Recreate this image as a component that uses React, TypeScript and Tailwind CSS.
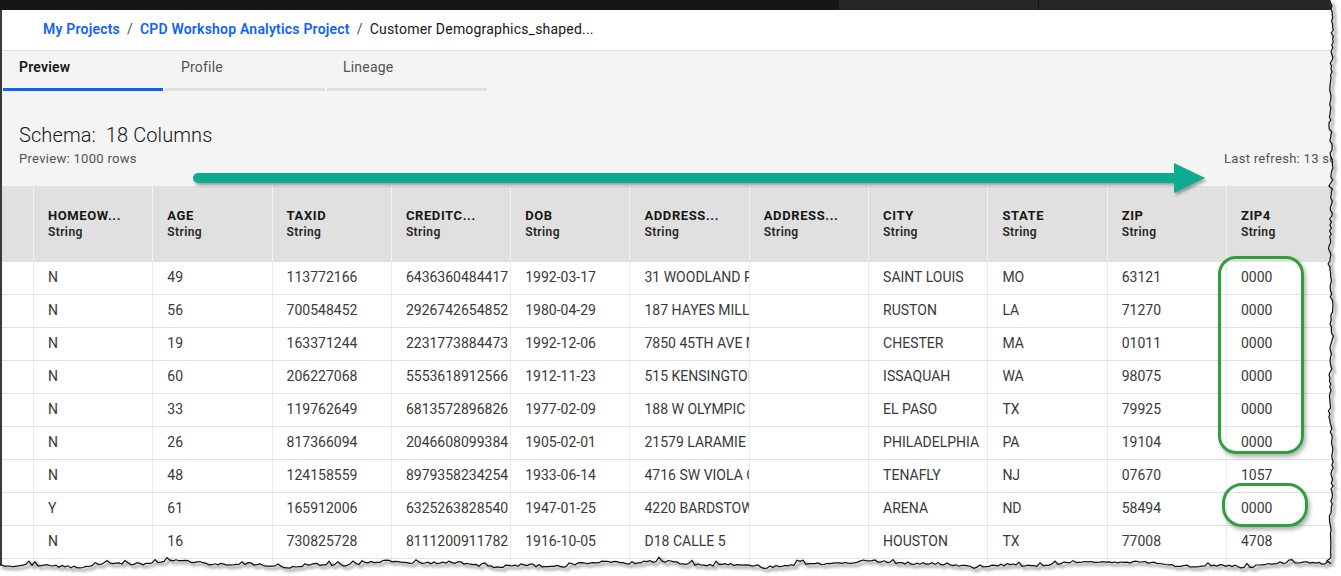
import React from "react";

type Row = string[];

const rows: Row[] = [
  ["N", "49", "113772166", "6436360484417", "1992-03-17", "31 WOODLAND RD", "", "SAINT LOUIS", "MO", "63121", "0000"],
  ["N", "56", "700548452", "2926742654852", "1980-04-29", "187 HAYES MILL RD", "", "RUSTON", "LA", "71270", "0000"],
  ["N", "19", "163371244", "2231773884473", "1992-12-06", "7850 45TH AVE NE", "", "CHESTER", "MA", "01011", "0000"],
  ["N", "60", "206227068", "5553618912566", "1912-11-23", "515 KENSINGTON AVE", "", "ISSAQUAH", "WA", "98075", "0000"],
  ["N", "33", "119762649", "6813572896826", "1977-02-09", "188 W OLYMPIC BLVD", "", "EL PASO", "TX", "79925", "0000"],
  ["N", "26", "817366094", "2046608099384", "1905-02-01", "21579 LARAMIE ST", "", "PHILADELPHIA", "PA", "19104", "0000"],
  ["N", "48", "124158559", "8979358234254", "1933-06-14", "4716 SW VIOLA CT", "", "TENAFLY", "NJ", "07670", "1057"],
  ["Y", "61", "165912006", "6325263828540", "1947-01-25", "4220 BARDSTOWN RD", "", "ARENA", "ND", "58494", "0000"],
  ["N", "16", "730825728", "8111200911782", "1916-10-05", "D18 CALLE 5", "", "HOUSTON", "TX", "77008", "4708"],
  ["N", "52", "418830291", "4417263350918", "1958-07-30", "902 MAPLE ST", "", "DENVER", "CO", "80202", "0000"],
];

const headers = [
  "HOMEOW...",
  "AGE",
  "TAXID",
  "CREDITC...",
  "DOB",
  "ADDRESS...",
  "ADDRESS...",
  "CITY",
  "STATE",
  "ZIP",
  "ZIP4",
];

function makeRng(seed: number) {
  let s = seed;
  return () => {
    s = (s * 16807) % 2147483647;
    return (s - 1) / 2147483646;
  };
}

function tearPaths() {
  const r = makeRng(7);
  const right: [number, number][] = [];
  for (let y = 0; y <= 562; y += 3) {
    let x = 1331 + (r() - 0.5) * 2.6 + Math.sin(y / 23) * 1.2;
    if (r() > 0.93) x -= 2.5;
    right.push([x, y]);
  }
  const bottom: [number, number][] = [];
  for (let x = 1331; x >= -2; x -= 3) {
    let y =
      564 +
      (r() - 0.5) * 2.4 +
      Math.sin(x / 37) * 2.2 +
      Math.sin(x / 11 + 1) * 1.1;
    if (r() > 0.9) y -= 3;
    bottom.push([x, y]);
  }
  const edge = [...right, ...bottom];
  const edgeStr = edge.map((p) => `${p[0].toFixed(1)},${p[1].toFixed(1)}`).join(" ");
  const outside = `1341,0 ${edgeStr} -2,576 1341,576`;
  return { edgeStr, outside };
}

function Tear() {
  const { edgeStr, outside } = tearPaths();
  return (
    <svg
      className="absolute left-0 top-0 pointer-events-none"
      width={1341}
      height={576}
      viewBox="0 0 1341 576"
    >
      <defs>
        <filter id="tshadow" x="-5%" y="-5%" width="110%" height="110%">
          <feGaussianBlur stdDeviation="1.6" />
        </filter>
      </defs>
      <polygon points={outside} fill="#ffffff" />
      <polyline
        points={edgeStr}
        fill="none"
        stroke="#8a8a8a"
        strokeWidth={2.5}
        transform="translate(2.5,2.5)"
        filter="url(#tshadow)"
        opacity={0.8}
      />
      <polyline points={edgeStr} fill="none" stroke="#111111" strokeWidth={1.2} />
    </svg>
  );
}

function Arrow() {
  return (
    <svg
      className="absolute left-0 top-0 pointer-events-none"
      width={1341}
      height={576}
      viewBox="0 0 1341 576"
    >
      <defs>
        <filter id="ashadow" x="-5%" y="-50%" width="110%" height="200%">
          <feDropShadow dx="1.5" dy="2.5" stdDeviation="1.5" floodColor="#000" floodOpacity="0.35" />
        </filter>
      </defs>
      <g filter="url(#ashadow)" fill="#08ab8f">
        <rect x={193} y={173} width={985} height={10} rx={5} />
        <polygon points="1174,163 1205,178 1174,193" />
      </g>
    </svg>
  );
}

function Callouts() {
  return (
    <>
      <div className="absolute left-[1218px] top-[256px] w-[86px] h-[198px] rounded-[18px] border-[3px] border-[#2f9e3c] shadow-[2px_3px_4px_rgba(0,0,0,0.3)] pointer-events-none" />
      <div className="absolute left-[1222px] top-[483px] w-[86px] h-[44px] rounded-[20px] border-[3px] border-[#2f9e3c] shadow-[2px_3px_4px_rgba(0,0,0,0.3)] pointer-events-none" />
    </>
  );
}

export default function App() {
  return (
    <div className="relative w-[1341px] h-[576px] overflow-hidden bg-white font-['Roboto','Liberation_Sans',sans-serif]">
      <div className="h-[576px] flex flex-col">
        {/* top dark bar */}
        <div className="h-[10px] flex shrink-0">
          <div className="w-[839px] bg-[#161616]" />
          <div className="w-[200px] bg-[#262626] border-r border-[#161616]" />
          <div className="flex-1 bg-[#262626]" />
        </div>
        <div className="flex-1 flex flex-col border-l-2 border-[#3a3a3a] min-h-0">
          {/* breadcrumb */}
          <div className="h-[41px] shrink-0 bg-white border-b border-[#e0e0e0] flex items-center pl-[41px] pb-[1px] text-[14px] tracking-[0.2px]">
            <span className="text-[#0f62fe] font-semibold">My Projects</span>
            <span className="text-[#525252] mx-[7px]">/</span>
            <span className="text-[#0f62fe] font-semibold">CPD Workshop Analytics Project</span>
            <span className="text-[#525252] mx-[7px]">/</span>
            <span className="text-[#161616]">Customer Demographics_shaped...</span>
          </div>
          {/* gray section */}
          <div className="bg-[#f4f4f4] shrink-0">
            <div className="flex gap-[2px] pl-[1px] h-[40px]">
              <div className="w-[160px] flex flex-col">
                <div className="flex-1 pt-[6px] pl-[16px] text-[14px] leading-[20px] font-semibold text-[#161616] tracking-[0.2px]">Preview</div>
                <div className="h-[3px] bg-[#0f62fe]" />
              </div>
              <div className="w-[160px] flex flex-col">
                <div className="flex-1 pt-[6px] pl-[16px] text-[14px] leading-[20px] text-[#525252] tracking-[0.2px]">Profile</div>
                <div className="h-[3px] bg-[#e0e0e0]" />
              </div>
              <div className="w-[160px] flex flex-col">
                <div className="flex-1 pt-[6px] pl-[16px] text-[14px] leading-[20px] text-[#525252] tracking-[0.2px]">Lineage</div>
                <div className="h-[3px] bg-[#e0e0e0]" />
              </div>
            </div>
            <div className="pl-[17px] pt-[30px] pb-[19px]">
              <div className="text-[20px] leading-[28px] font-light text-[#161616] whitespace-pre tracking-[0.1px]">Schema:  18 Columns</div>
              <div className="flex mt-[2px] text-[13px] leading-[16px] text-[#525252] whitespace-nowrap tracking-[0.3px]">
                <div className="w-[1205px] shrink-0">Preview: 1000 rows</div>
                <div>Last refresh: 13 seconds ago</div>
              </div>
            </div>
          </div>
          {/* table */}
          <div className="flex-1 min-h-0 bg-white">
            <div className="grid grid-cols-[31px_repeat(11,119.3px)] h-[75px] bg-[#e0e0e0]">
              <div />
              {headers.map((h, i) => (
                <div key={i} className="border-l border-[#f2f2f2] pl-[14px] flex flex-col justify-center overflow-hidden whitespace-nowrap">
                  <div className="text-[13px] leading-[17px] font-bold text-[#161616] tracking-[0.6px]">{h}</div>
                  <div className="text-[12px] leading-[16px] font-semibold text-[#262626] tracking-[0.4px]">String</div>
                </div>
              ))}
            </div>
            {rows.map((r, ri) => (
              <div key={ri} className="grid grid-cols-[31px_repeat(11,119.3px)] h-[33px] border-t border-[#e0e0e0]">
                <div />
                {r.map((c, ci) => (
                  <div key={ci} className="border-l border-[#ececec] pl-[14px] pb-[1px] flex items-center overflow-hidden whitespace-nowrap text-[14px] text-[#393939]">
                    {c}
                  </div>
                ))}
              </div>
            ))}
          </div>
        </div>
      </div>
      <Arrow />
      <Callouts />
      <Tear />
    </div>
  );
}
